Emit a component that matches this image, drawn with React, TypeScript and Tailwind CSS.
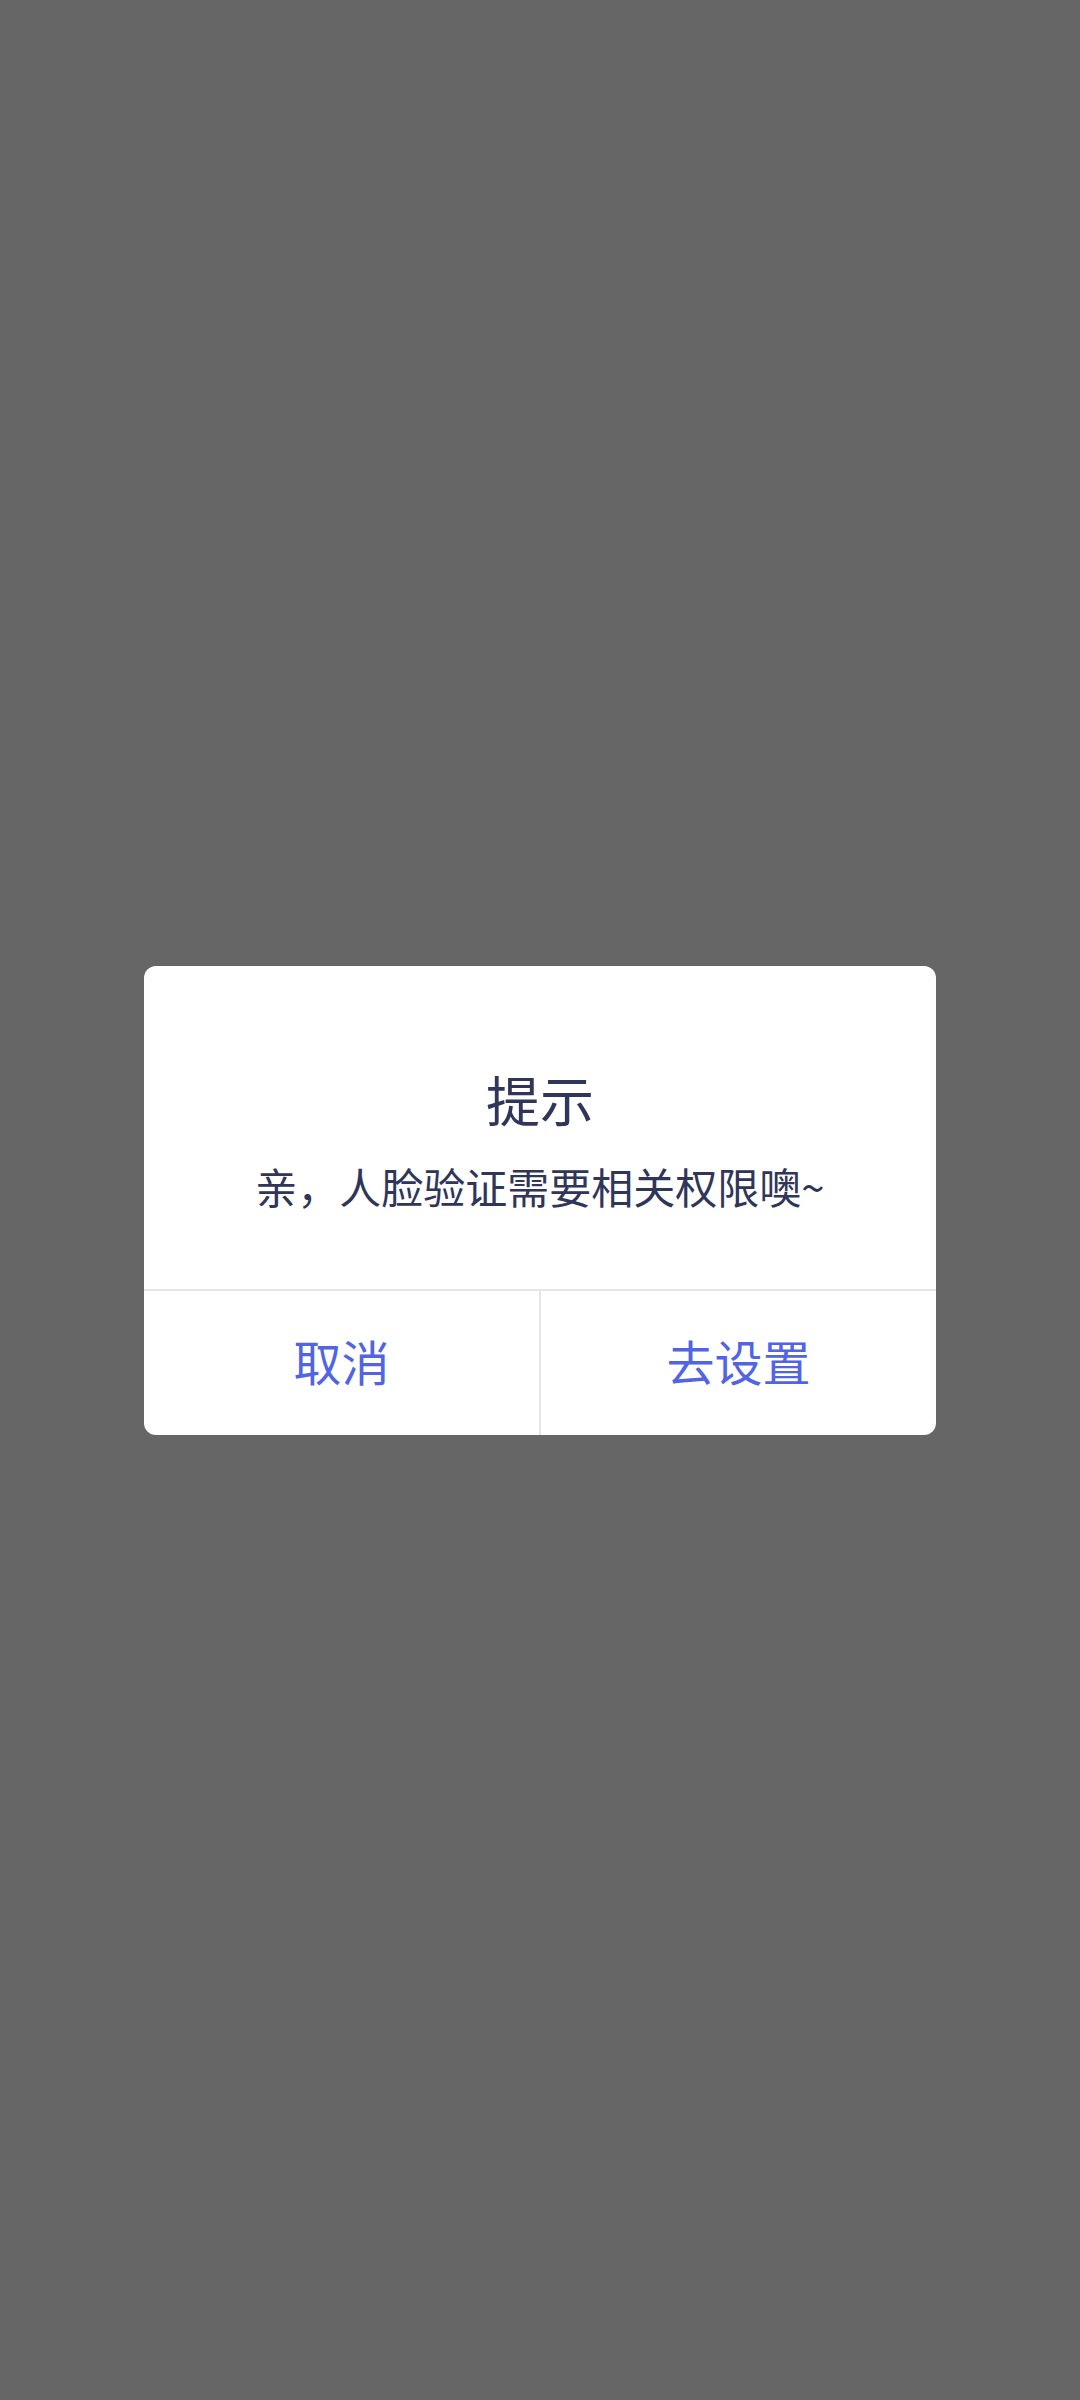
const App = () => {
  return (
    <div
      className="min-h-screen w-full bg-[#666666] flex items-center justify-center"
      style={{ fontFamily: '"Noto Sans CJK SC", "Noto Sans", sans-serif' }}
    >
      <div className="w-[792px] h-[469px] bg-white rounded-[12px] flex flex-col overflow-hidden">
        <div className="flex-1 flex flex-col items-center pt-[106px]">
          <h2 className="text-[54px] leading-[54px] text-[#30355a]">提示</h2>
          <p className="mt-[39px] text-[42px] leading-[42px] text-[#30355a]">亲，人脸验证需要相关权限噢~</p>
        </div>
        <div className="h-[2px] bg-[#e5e5e5]" />
        <div className="h-[144px] flex">
          <button className="flex-1 flex items-center justify-center pb-[5px] text-[48px] text-[#5064e4]">取消</button>
          <div className="w-[2px] bg-[#e5e5e5]" />
          <button className="flex-1 flex items-center justify-center pb-[5px] text-[48px] text-[#5064e4]">去设置</button>
        </div>
      </div>
    </div>
  );
};

export default App;
